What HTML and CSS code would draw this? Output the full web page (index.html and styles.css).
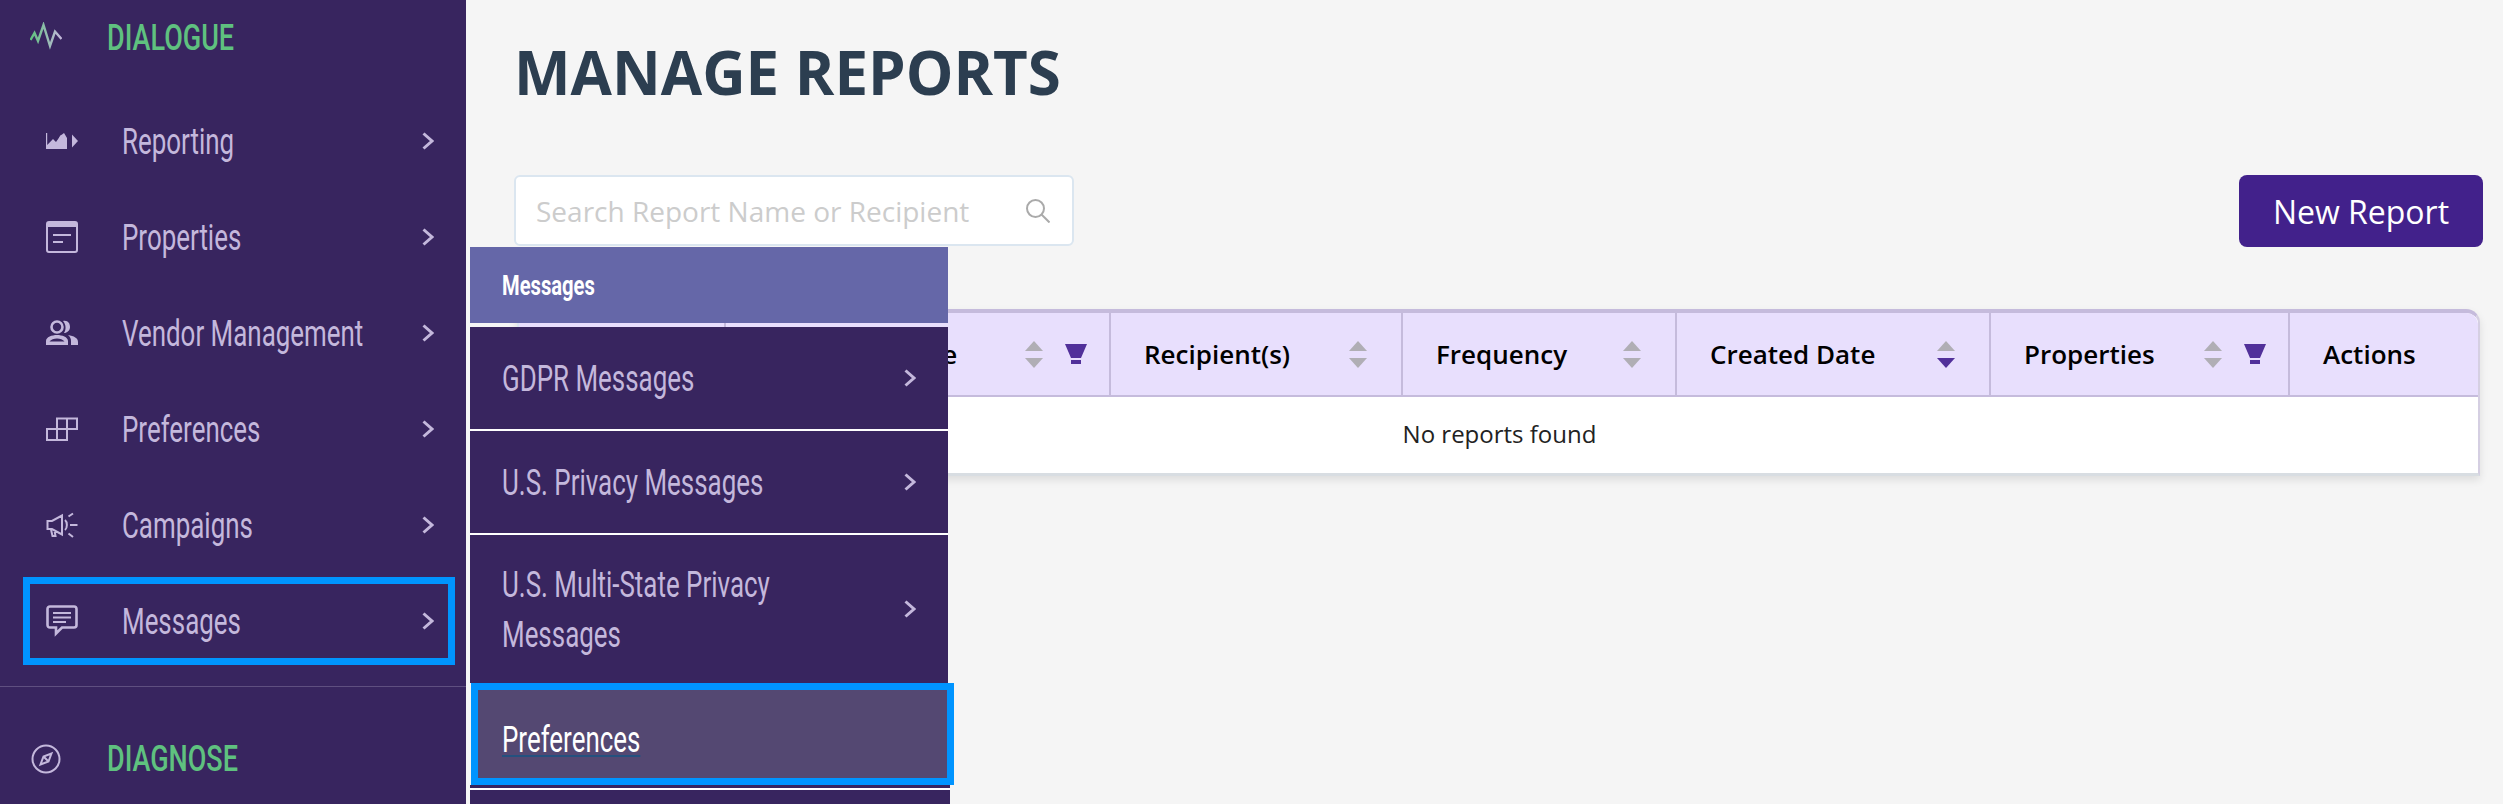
FILE: index.html
```html
<!DOCTYPE html>
<html lang="en">
<head>
<meta charset="utf-8">
<title>Manage Reports</title>
<link rel="stylesheet" href="styles.css">
</head>
<body>
<div class="app">
  <aside class="sidebar">
    <div class="section-head">
      <svg class="section-icon" viewBox="0 0 32 32"><defs><linearGradient id="pulse" x1="0" x2="1" y1="0" y2="0"><stop offset="0" stop-color="#5fc17f"/><stop offset="1" stop-color="#c4b8dc"/></linearGradient></defs><path class="pulse-line" d="M0.5 18 L4.500 11 L8 19 L13.500 3 L20 24 L25 9.500 L31.500 17"/></svg>
      <span class="head-label"><span class="txt">DIALOGUE</span></span>
    </div>
    <nav class="nav">
      <a class="nav-row">
        <svg class="nav-icon" viewBox="0 0 32 32"><path class="solid" d="M0 8H1.200V20L7 14 10 17 15 10 17 11 20 24H0Z"/><path class="solid" d="M8 24L14 11 18 8 21 13V24Z"/><path class="solid" d="M26 9.500L32 16L26 22.500Z"/></svg>
        <span class="nav-label"><span class="txt">Reporting</span></span>
        <svg class="chev" viewBox="0 0 12 18"><path d="M1.500 1.500L10 9L1.500 16.500"/></svg>
      </a>
      <a class="nav-row">
        <svg class="nav-icon" viewBox="0 0 32 32"><rect class="line" x="1" y="1" width="30" height="30" rx="2"/><rect class="solid" x="1" y="1" width="30" height="5"/><path class="line" d="M7 14H25 M7 21H17"/></svg>
        <span class="nav-label"><span class="txt">Properties</span></span>
        <svg class="chev" viewBox="0 0 12 18"><path d="M1.500 1.500L10 9L1.500 16.500"/></svg>
      </a>
      <a class="nav-row">
        <svg class="nav-icon" viewBox="0 0 32 32"><circle class="line thick" cx="11" cy="10" r="5.500"/><path class="solid" d="M0 28V24C0 20 6 18 11 18S22 20 22 24V28H0ZM3.500 24.500H18.500C17 22.500 14 21.500 11 21.500S5 22.500 3.500 24.500Z"/><path class="solid" d="M17 4C22 3 24 6.500 24 10S21 16 18 16C20 13 20.500 8 17 4ZM22 18C28 19 32 21 32 25V28H25V24C25 21.500 24 19.500 22 18Z"/></svg>
        <span class="nav-label"><span class="txt">Vendor Management</span></span>
        <svg class="chev" viewBox="0 0 12 18"><path d="M1.500 1.500L10 9L1.500 16.500"/></svg>
      </a>
      <a class="nav-row">
        <svg class="nav-icon" viewBox="0 0 32 32"><path class="line" d="M1 27V16H11V27Z M11 27V16H21V27Z M11 16V5.500H21V16Z M21 5.500H31V16H21Z M21 27H11"/></svg>
        <span class="nav-label"><span class="txt">Preferences</span></span>
        <svg class="chev" viewBox="0 0 12 18"><path d="M1.500 1.500L10 9L1.500 16.500"/></svg>
      </a>
      <a class="nav-row">
        <svg class="nav-icon" viewBox="0 0 32 32"><path class="line" d="M1.500 12H6L16 6.500V25.500L6 20H1.500Z M5 20.500L6.500 27H9.500L8.500 21.500 M19 11C21.500 13 21.500 19 19 21"/><path class="line" d="M24 16H31.500 M22.500 7.500L27 4.500 M22.500 24.500L27 28"/></svg>
        <span class="nav-label"><span class="txt">Campaigns</span></span>
        <svg class="chev" viewBox="0 0 12 18"><path d="M1.500 1.500L10 9L1.500 16.500"/></svg>
      </a>
      <a class="nav-row active">
        <svg class="nav-icon" viewBox="0 0 32 32"><path class="line thick" d="M4 1.500H28C29.500 1.500 30.500 2.500 30.500 4V20C30.500 21.500 29.500 22.500 28 22.500H16L10 28.500V22.500H4C2.500 22.500 1.500 21.500 1.500 20V4C1.500 2.500 2.500 1.500 4 1.500Z"/><path class="line" d="M7 8H25 M7 12.500H25 M7 17H20"/></svg>
        <span class="nav-label"><span class="txt">Messages</span></span>
        <svg class="chev" viewBox="0 0 12 18"><path d="M1.500 1.500L10 9L1.500 16.500"/></svg>
      </a>
    </nav>
    <div class="divider"></div>
    <div class="section-head lower">
      <svg class="section-icon" viewBox="0 0 32 32"><circle class="line" cx="16" cy="16" r="13.500"/><path class="line" d="M21.500 10.500L18.500 18.500L10.500 21.500L13.500 13.500Z M13.500 13.500L18.500 18.500"/></svg>
      <span class="head-label"><span class="txt">DIAGNOSE</span></span>
    </div>
  </aside>

  <main class="main">
    <h1 class="title">MANAGE REPORTS</h1>
    <div class="toolbar">
      <div class="search">
        <span class="placeholder">Search Report Name or Recipient</span>
        <svg class="search-icon" viewBox="0 0 24 24"><circle cx="9.500" cy="9.500" r="8.500"/><path d="M15.500 15.500L23.500 23.500"/></svg>
      </div>
      <button class="new-btn">New Report</button>
    </div>
    <section class="table">
      <div class="thead">
        <div class="th"></div>
        <div class="th filtered name-col"><span class="th-name">Report Name</span><span class="sort"><i class="up"></i><i class="down"></i></span><svg class="funnel" viewBox="0 0 22 20"><path d="M0 0H22L16 14H6Z M6 16H16V20H6Z"/></svg></div>
        <div class="th"><span class="th-name">Recipient(s)</span><span class="sort"><i class="up"></i><i class="down"></i></span></div>
        <div class="th"><span class="th-name">Frequency</span><span class="sort"><i class="up"></i><i class="down"></i></span></div>
        <div class="th"><span class="th-name">Created Date</span><span class="sort"><i class="up"></i><i class="down on"></i></span></div>
        <div class="th filtered"><span class="th-name">Properties</span><span class="sort"><i class="up"></i><i class="down"></i></span><svg class="funnel" viewBox="0 0 22 20"><path d="M0 0H22L16 14H6Z M6 16H16V20H6Z"/></svg></div>
        <div class="th last"><span class="th-name">Actions</span></div>
      </div>
      <div class="empty">No reports found</div>
    </section>
  </main>

  <div class="flyout">
    <div class="fly-head"><span class="txt">Messages</span></div>
    <a class="fly-item first"><span class="fly-label"><span class="txt">GDPR Messages</span></span><svg class="chev" viewBox="0 0 12 18"><path d="M1.500 1.500L10 9L1.500 16.500"/></svg></a>
    <a class="fly-item"><span class="fly-label"><span class="txt">U.S. Privacy Messages</span></span><svg class="chev" viewBox="0 0 12 18"><path d="M1.500 1.500L10 9L1.500 16.500"/></svg></a>
    <a class="fly-item tall"><span class="fly-label"><span class="txt">U.S. Multi-State Privacy Messages</span></span><svg class="chev" viewBox="0 0 12 18"><path d="M1.500 1.500L10 9L1.500 16.500"/></svg></a>
    <a class="fly-item current"><span class="fly-label"><span class="txt">Preferences</span></span></a>
    <div class="fly-item rest-top"></div>
    <div class="fly-item rest"></div>
  </div>
</div>
</body>
</html>
```
FILE: styles.css
```css
* { box-sizing: border-box; }
html, body { margin: 0; height: 100%; }
body { background: #f5f5f5; overflow: hidden; font-family: "Open Sans", "Noto Sans", sans-serif; }
.app { position: relative; display: flex; height: 804px; overflow: hidden; }

/* condensed display text: Roboto narrowed, stands in for a condensed webfont */
.txt { display: block; width: 138.9%; white-space: nowrap; transform: scaleX(.72); transform-origin: left center; font-family: Roboto, "Liberation Sans", sans-serif; }

/* sidebar */
.sidebar { flex: 0 0 466px; background: #38255f; overflow: hidden; }
.section-head { display: flex; align-items: center; height: 76px; padding-left: 30px; color: #5fc17f; font-size: 36px; font-weight: 500; }
.head-label { flex: 1; margin-left: 45px; }
.head-label .txt { transform: scaleX(.75); }
.section-icon { width: 32px; height: 32px; flex: none; }
.pulse-line { fill: none; stroke: url(#pulse); stroke-width: 2.4; }
.section-head.lower { margin-top: 34px; }
.nav { padding-top: 21px; }
.nav-row { display: flex; align-items: center; height: 88px; margin: 0 11px 8px 23px; padding: 0 14px 0 16px; border: 7px solid transparent; color: #c4b8dc; }
.nav-row.active { border-color: #0094ff; }
.nav-row:last-child { margin-bottom: 0; }
.nav-icon { width: 32px; height: 32px; flex: none; }
.nav-label, .fly-label { flex: 1; min-width: 0; padding-top: 2px; font-size: 36px; font-weight: 400; }
.nav-label { margin-left: 44px; }
.solid { fill: #c4b8dc; stroke: none; }
.line { fill: none; stroke: #c4b8dc; stroke-width: 2; }
.line.thick { stroke-width: 2.6; }
.chev { width: 12px; height: 18px; flex: none; }
.chev path { fill: none; stroke: #c4b8dc; stroke-width: 3; }
.divider { height: 1px; margin-top: 21px; background: #5f4f80; }

/* main */
.main { flex: 1; min-width: 0; padding: 30px 20px 0 48px; }
.title { margin: 0; height: 84px; line-height: 84px; font-size: 60px; font-weight: 700; color: #2c3e50; }
.toolbar { display: flex; justify-content: space-between; align-items: flex-start; margin-top: 61px; }
.search { display: flex; align-items: center; justify-content: space-between; width: 560px; height: 71px; padding: 0 22px 0 20px; background: #fff; border: 2px solid #dbe6f0; border-radius: 6px; }
.placeholder { font-size: 28px; color: #ccc; }
.search-icon { width: 24px; height: 24px; }
.search-icon circle, .search-icon path { fill: none; stroke: #aaa; stroke-width: 2; }
.new-btn { width: 244px; height: 72px; border: 0; border-radius: 8px; background: #42218b; color: #fff; font-family: inherit; font-size: 32px; }

/* table */
.table { margin: 62px 3px 0 3px; background: #fff; border-top: 4px solid #c5bbdc; border-right: 2px solid #d5cfe2; border-left: 2px solid #dbe6f0; border-bottom: 3px solid #d8dde2; border-top-right-radius: 14px; box-shadow: 0 4px 8px rgba(0,0,0,.1); }
.thead { display: grid; grid-template-columns: 207px 385px 292px 274px 314px 299px 1fr; height: 84px; background: #e8dffd; border-bottom: 2px solid #c5bbdc; border-top-right-radius: 12px; }
.th { display: flex; align-items: center; padding: 0 31px 0 33px; border-right: 2px solid #c5bbdc; font-size: 26px; font-weight: 600; color: #000; }
.th.filtered { padding-right: 18px; }
.th.last { border-right: 0; }
.th-name { flex: 1; white-space: nowrap; }
.name-col .th-name { padding-left: 31px; }
.sort { display: flex; flex-direction: column; gap: 7px; flex: none; margin-right: 3px; }
.sort i { display: block; width: 0; height: 0; border-left: 9px solid transparent; border-right: 9px solid transparent; }
.sort .up { border-bottom: 10px solid #b0aeb5; }
.sort .down { border-top: 10px solid #b0aeb5; }
.sort .down.on { border-top-color: #51309a; }
.funnel { width: 22px; height: 20px; margin: 0 4px 0 19px; flex: none; fill: #51309a; }
.empty { display: flex; align-items: center; justify-content: center; height: 76px; padding: 0 0 3px 2px; font-size: 24px; color: #222; }

/* flyout menu */
.flyout { position: absolute; left: 470px; top: 247px; width: 478px; }
.fly-head { display: flex; align-items: center; height: 76px; padding-left: 32px; background: #6567a8; color: #fff; font-size: 28px; font-weight: 700; }
.fly-head .txt { width: auto; }
.fly-item { display: flex; align-items: center; height: 104px; padding: 0 32px 0 32px; background: #38255f; color: #c4b8dc; border-bottom: 2px solid #fff; }
.fly-item.first { margin-top: 4px; }
.fly-item.tall { height: 148px; border-bottom: 0; }
.fly-label { line-height: 50px; }
.tall .txt { width: 490px; white-space: normal; }
.fly-item.current { width: 483px; height: 102px; margin-left: 1px; padding: 9px 0 0 24px; background: #544872; border: 7px solid #0094ff; }
.current .txt { color: #fff; text-decoration: underline; text-decoration-color: #24517f; text-decoration-thickness: 2px; text-underline-offset: 3px; }
.fly-item.rest-top { width: 480px; height: 5px; }
.fly-item.rest { width: 480px; height: 14px; border-bottom: 0; }
```
